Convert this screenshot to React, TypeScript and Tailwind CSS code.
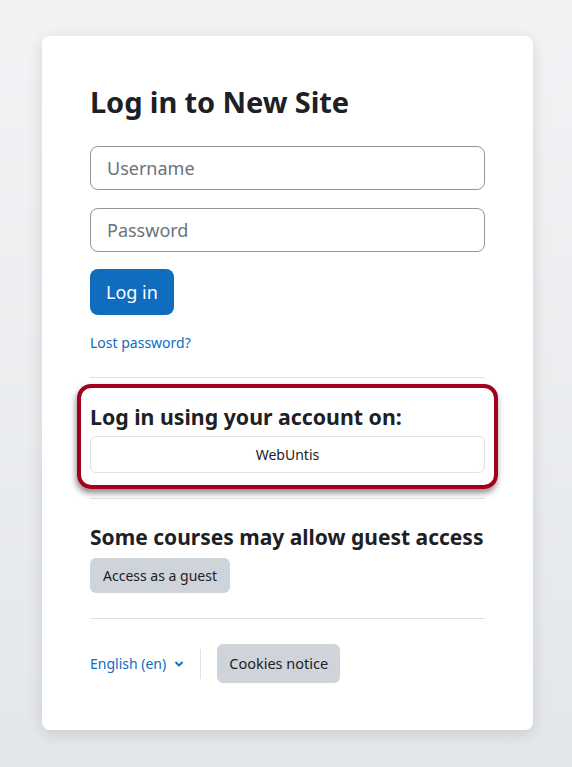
import React from 'react'

const font = { fontFamily: '"Noto Sans", "Open Sans", sans-serif' }

function Divider({ className = '' }: { className?: string }) {
  return <div className={`h-px bg-[#dee2e6] ${className}`} />
}

export default function App() {
  return (
    <div
      className="min-h-[767px] w-full bg-gradient-to-b from-[#f2f3f5] to-[#e4e7ea] pt-[36px] pb-[38px]"
      style={font}
    >
      <div className="ml-[42px] w-[491px] rounded-lg bg-white px-[48px] pt-[48px] pb-[47px] shadow-[0_4px_16px_rgba(0,0,0,0.12)] text-[#1d2125]">
        <h2 className="text-[29px] font-bold leading-[36px] tracking-[-0.1px]">Log in to New Site</h2>

        <div className="mt-[26px] flex flex-col gap-[18px]">
          <input
            placeholder="Username"
            className="h-[44px] w-full rounded-lg border border-[#8f959e] px-[16px] text-[18px] placeholder:text-[#6a737b] outline-none"
          />
          <input
            type="password"
            placeholder="Password"
            className="h-[44px] w-full rounded-lg border border-[#8f959e] px-[16px] text-[18px] placeholder:text-[#6a737b] outline-none"
          />
        </div>

        <button className="mt-[17px] h-[46px] rounded-lg bg-[#0f6cbf] px-[16px] text-[18px] text-white">
          Log in
        </button>

        <div className="mt-[17px] h-[21px] text-[14px] leading-[21px] text-[#0f6cbf]">Lost password?</div>

        <Divider className="mt-[24px]" />

        <div className="relative mt-[26px]">
          <div className="pointer-events-none absolute -top-[20px] -bottom-[16px] -left-[13px] -right-[13px] rounded-[14px] border-[4px] border-[#a1001f] shadow-[-1px_4px_6px_rgba(0,0,0,0.45)]" />
          <h3 className="whitespace-nowrap text-[21.3px] font-bold leading-[26px]">Log in using your account on:</h3>
          <button className="mt-[6px] h-[37px] w-full rounded-md border border-[#dee2e6] bg-white text-[14px] text-[#1d2125]">
            WebUntis
          </button>
        </div>

        <Divider className="mt-[25px]" />

        <h3 className="mt-[25px] whitespace-nowrap text-[21px] font-bold leading-[26px]">Some courses may allow guest access</h3>
        <button className="mt-[8px] h-[35px] rounded-md bg-[#ced4da] px-[13px] text-[14px] text-[#1d2125]">
          Access as a guest
        </button>

        <Divider className="mt-[25px]" />

        <div className="mt-[25px] flex items-center">
          <div className="flex items-center gap-[8px] text-[14px] text-[#0f6cbf]">
            <span>English ‎(en)‎</span>
            <svg width="10" height="10" viewBox="0 0 10 10" fill="none">
              <path d="M2 3.5 5 6.5 8 3.5" stroke="#0f6cbf" strokeWidth="1.8" strokeLinecap="round" strokeLinejoin="round" />
            </svg>
          </div>
          <div className="ml-[16px] h-[30px] w-px bg-[#dee2e6]" />
          <button className="ml-[16px] h-[39px] rounded-md bg-[#ced4da] px-[12px] text-[14.5px] text-[#1d2125]">
            Cookies notice
          </button>
        </div>
      </div>
    </div>
  )
}
